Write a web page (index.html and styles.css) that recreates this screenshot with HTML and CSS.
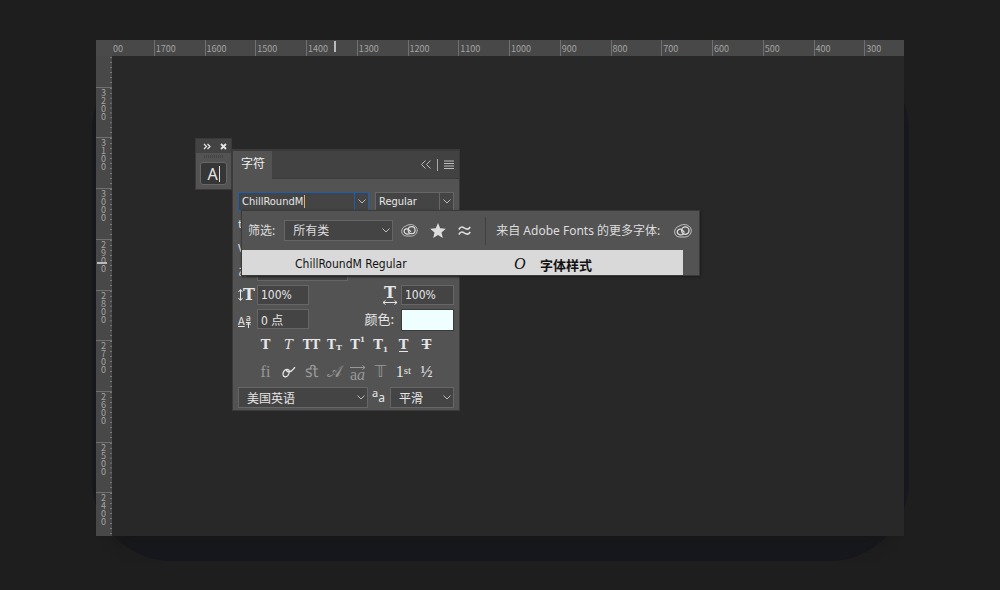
FILE: index.html
```html
<!DOCTYPE html>
<html lang="zh-CN">
<head>
    <meta charset="UTF-8">
    <meta name="viewport" content="width=device-width, initial-scale=1.0">
    <title>字符</title>
    <link rel="stylesheet" href="styles.css">
</head>
<body>
    <svg class="defs" aria-hidden="true">
        <symbol id="cloud" viewBox="0 0 18 14">
            <path d="M5 2.200C7.500.2 12.500 0 14.500 2c3.300 1.500 3.800 6.500.8 9.300-1.200 1.200-2.800 1.700-4.300 1.700H6C2.600 13 .6 10.800.6 7.900c0-2.800 1.900-5 4.400-5.700z" fill="none" stroke="currentColor" stroke-width="1" opacity=".8"/>
            <path d="M9.600 10.200C7 11.600 3.200 10.900 3.200 7.900c0-2.600 3.300-3.700 5.100-1.700l2.200 2.300" fill="none" stroke="currentColor" stroke-width="1.300"/>
            <circle cx="11.300" cy="6.600" r="3.700" fill="none" stroke="currentColor" stroke-width="1.300"/>
        </symbol>
    </svg>

    <main class="window">
        <div class="corner"></div>
        <div class="ruler ruler-top">
            <div class="scale">
                <span class="partial">00</span><span>1700</span><span>1600</span><span>1500</span>
                <span>1400</span><span>1300</span><span>1200</span><span>1100</span>
                <span>1000</span><span>900</span><span>800</span><span>700</span>
                <span>600</span><span>500</span><span>400</span><span>300</span>
            </div>
            <i class="marker"></i>
        </div>
        <div class="ruler ruler-left">
            <div class="scale">
                <span></span><span>3200</span><span>3100</span><span>3000</span><span>2900</span>
                <span>2800</span><span>2700</span><span>2600</span><span>2500</span><span>2400</span>
            </div>
            <i class="marker"></i>
        </div>

        <div class="canvas">
            <!-- collapsed dock -->
            <aside class="dock">
                <div class="dock-bar">
                    <svg width="8" height="7" viewBox="0 0 8 7"><path d="M1 1l2.500 2.500L1 6M4.500 1 7 3.500 4.500 6" fill="none" stroke="currentColor" stroke-width="1.200"/></svg>
                    <svg width="7" height="7" viewBox="0 0 7 7"><path d="M1 1l5 5M6 1 1 6" stroke="currentColor" stroke-width="1.800"/></svg>
                </div>
                <div class="grip"></div>
                <button class="dock-btn">A<i></i></button>
            </aside>

            <!-- character panel -->
            <section class="panel">
                <header class="panel-head">
                    <h1 class="tab">字符</h1>
                    <button class="plain" aria-label="折叠"><svg width="10" height="9" viewBox="0 0 10 9"><path d="M4.500.5l-4 4 4 4M9.500.5l-4 4 4 4" fill="none" stroke="currentColor"/></svg></button>
                    <i class="bar"></i>
                    <button class="plain" aria-label="菜单"><svg width="10" height="9" viewBox="0 0 10 9"><path d="M0 1h10M0 3.500h10M0 6h10M0 8.500h10" stroke="currentColor" stroke-width="1"/></svg></button>
                </header>
                <div class="panel-body">
                    <div class="font-row">
                        <div class="combo active">
                            <input type="text" value="ChillRoundM" size="4" class="family" aria-label="字体">
                            <button class="chev" aria-label="字体列表"></button>
                        </div>
                        <div class="combo">
                            <input type="text" value="Regular" size="4" aria-label="字体样式">
                            <button class="chev" aria-label="样式列表"></button>
                        </div>
                    </div>

                    <div class="fields">
                        <label class="ico" for="size">tT</label><input id="size" class="field" type="text">
                        <label class="ico" for="lead">A</label><input id="lead" class="field" type="text">
                        <label class="ico" for="kern">V/A</label><input id="kern" class="field" type="text">
                        <label class="ico" for="track">VA</label><input id="track" class="field" type="text">
                        <label class="ico" for="prop">あ</label><input id="prop" class="field wide" type="text">
                        <label class="ico" for="vscale" aria-label="垂直缩放">
                            <svg width="5" height="14" viewBox="0 0 5 14"><path d="M2.500 2v10M.5 4l2-2.500 2 2.500M.5 10l2 2.500 2-2.500" fill="none" stroke="currentColor"/></svg><b class="bigt">T</b>
                        </label>
                        <input id="vscale" class="field" type="text" value="100%">
                        <label class="ico right" for="hscale" aria-label="水平缩放">
                            <span class="stack"><b class="bigt">T</b><svg width="16" height="5" viewBox="0 0 16 5"><path d="M1 2.500h14M3.500.5l-2.500 2 2.500 2M12.500.5l2.500 2-2.500 2" fill="none" stroke="currentColor"/></svg></span>
                        </label>
                        <input id="hscale" class="field" type="text" value="100%">
                        <label class="ico base" for="shift" aria-label="基线偏移">
                            <u>A</u><span class="stack"><u>a</u><svg width="5" height="6" viewBox="0 0 5 6"><path d="M2.500 6V1M.5 3l2-2 2 2" fill="none" stroke="currentColor"/></svg></span>
                        </label>
                        <input id="shift" class="field" type="text" value="0 点">
                        <label class="color-label" for="color">颜色:</label>
                        <input id="color" class="swatch" type="color" value="#efffff">
                    </div>

                    <div class="styles">
                        <button><b>T</b></button>
                        <button><em>T</em></button>
                        <button class="pair">TT</button>
                        <button class="pair">T<small>T</small></button>
                        <button>T<sup>1</sup></button>
                        <button>T<sub>1</sub></button>
                        <button><u>T</u></button>
                        <button><s>T</s></button>
                    </div>
                    <div class="styles opentype">
                        <button class="off">fi</button>
                        <button aria-label="上下文替代字"><svg width="14" height="12" viewBox="0 0 14 12"><path d="M5 3.500C2.500 3.500.8 6 1 8.500c.2 2.700 3.200 3 5 .8 2-2.600 1.800-5.800-.5-5.800-2 0-.8 2.500 1.500 2.400C10 5.800 11 3.500 13 1.200" fill="none" stroke="currentColor" stroke-width="1.300"/></svg></button>
                        <button class="off">ﬆ</button>
                        <button class="off script">𝒜</button>
                        <button class="off over"><svg width="16" height="5" viewBox="0 0 16 5"><path d="M0 2.500h15M12.500.5l2.500 2-2.500 2" fill="none" stroke="currentColor"/></svg><span>a<em>a</em></span></button>
                        <button class="off dbl">𝕋</button>
                        <button>1<sup>st</sup></button>
                        <button>½</button>
                    </div>

                    <div class="bottom-row">
                        <select class="select" aria-label="语言"><option>美国英语</option></select>
                        <label class="aa" for="alias"><sup>a</sup>a</label>
                        <select id="alias" class="select"><option>平滑</option></select>
                    </div>
                </div>
            </section>

            <!-- font list dropdown -->
            <div class="popup">
                <div class="filter">
                    <label for="class">筛选:</label>
                    <select id="class" class="select"><option>所有类</option></select>
                    <button class="plain" aria-label="Adobe Fonts"><svg width="17" height="13"><use href="#cloud"/></svg></button>
                    <button class="plain" aria-label="收藏"><svg width="16" height="15" viewBox="0 0 16 15"><path d="M8 0l2.200 5.300 5.600.4-4.300 3.700 1.300 5.500L8 12l-4.800 2.900 1.300-5.500L.2 5.700l5.600-.4z" fill="currentColor"/></svg></button>
                    <button class="plain" aria-label="相似字体"><svg width="13" height="10" viewBox="0 0 13 10"><path d="M.8 3.500C3-.2 4.800 1 6.500 2.200 8.500 3.500 10.500 3.800 12.200 1M.8 8.500C3 4.800 4.800 6 6.500 7.200c2 1.300 4 1.600 5.700-1.200" fill="none" stroke="currentColor" stroke-width="1.600"/></svg></button>
                    <span class="more">来自 Adobe Fonts 的更多字体:</span>
                    <button class="plain" aria-label="更多字体"><svg width="18" height="14"><use href="#cloud"/></svg></button>
                </div>
                <button class="result">
                    <span class="name">ChillRoundM Regular</span>
                    <em>O</em>
                    <strong>字体样式</strong>
                </button>
            </div>
        </div>
    </main>
</body>
</html>
```
FILE: styles.css
```css
* {
    box-sizing: border-box;
}

body {
    margin: 0;
    padding: 40px 96px 54px;
    min-height: 100vh;
    display: flex;
    background: #1e1e1e;
    color: #e6e6e6;
    font-family: "Noto Sans CJK SC", "Noto Sans", sans-serif;
    font-size: 12px;
    line-height: 16px;
}

button, input, select {
    margin: 0;
    padding: 0;
    border: 0;
    border-radius: 0;
    background: none;
    color: inherit;
    font: inherit;
    outline: none;
}

svg {
    display: block;
}

.defs {
    position: absolute;
    width: 0;
    height: 0;
}

/* window with rulers */
.window {
    position: relative;
    flex: 1;
    display: grid;
    grid-template-columns: 16px 1fr;
    grid-template-rows: 16px 1fr;
    box-shadow: 0 24px 14px -20px #171717;
}

.window::before {
    content: "";
    position: absolute;
    z-index: -1;
    inset: 10px -5px -25px -4px;
    border-radius: 80px;
    background: #17181d;
}

.corner {
    background: #4a4a4a;
}

.ruler {
    position: relative;
    display: grid;
    overflow: hidden;
    background: #484848;
    color: #a3a3a3;
    font-size: 9px;
}

.scale {
    display: grid;
}

.ruler-top .scale {
    grid-template-columns: repeat(16, 1fr);
    margin: 0 -11px 0 -9px;
}

.ruler-top span {
    padding-left: 1px;
    line-height: 18px;
    border-left: 1px solid #707070;
    background: linear-gradient(90deg, #777 1px, transparent 1px) 0 100% / 10% 2px repeat-x;
}

.ruler-top .partial {
    padding-left: 9px;
}

.ruler-left .scale {
    grid-template-rows: repeat(10, 1fr);
    margin: -20px 0 -7px;
}

.ruler-left span {
    padding: 1px 3px 0 5px;
    line-height: 8px;
    word-break: break-all;
    border-top: 1px solid #707070;
    background: linear-gradient(#777 1px, transparent 1px) 100% 0 / 2px 10% repeat-y;
}

.marker {
    position: absolute;
    background: #bbb;
}

.ruler-top .marker {
    left: 222px;
    top: 1px;
    width: 2px;
    height: 11px;
}

.ruler-left .marker {
    left: 1px;
    top: 206px;
    width: 10px;
    height: 2px;
}

.canvas {
    position: relative;
    background: #282828;
}

/* dock */
.dock {
    position: absolute;
    left: 83px;
    top: 82px;
    width: 37px;
    border: 1px solid #3a3a3a;
    background: #535353;
}

.dock-bar {
    display: flex;
    align-items: center;
    justify-content: space-between;
    height: 14px;
    padding: 0 4px 0 7px;
    background: #434343;
}

.grip {
    height: 3px;
    margin: 2px 8px 4px;
    background: repeating-linear-gradient(90deg, #444 0 1px, #535353 1px 2px);
}

.dock-btn {
    display: flex;
    align-items: center;
    justify-content: center;
    width: 27px;
    height: 23px;
    margin: 0 4px 4px;
    border: 1px solid #666;
    border-radius: 3px;
    background: #363636;
    font-family: "Noto Sans", sans-serif;
    font-size: 16px;
}

.dock-btn i {
    width: 1px;
    height: 16px;
    margin-left: 1px;
    background: #ddd;
}

/* panel */
.panel {
    position: absolute;
    left: 120px;
    top: 93px;
    width: 228px;
    border: 1px solid #3a3a3a;
    border-top-width: 2px;
    background: #535353;
}

.panel-head {
    display: flex;
    align-items: center;
    gap: 6px;
    height: 28px;
    padding-right: 5px;
    background: #424242;
    border-bottom: 1px solid #3b3b3b;
    color: #bbb;
}

.tab {
    height: 28px;
    margin: 0 auto 0 0;
    padding: 0 7px 0 8px;
    background: #535353;
    color: #f0f0f0;
    font-size: 12px;
    font-weight: normal;
    line-height: 24px;
}

.bar {
    width: 1px;
    height: 12px;
    background: #aaa;
}

.panel-body {
    padding: 13px 5px 1px;
}

.font-row {
    display: grid;
    grid-template-columns: 131px 1fr;
    gap: 6px;
    margin-bottom: 2px;
}

.combo {
    display: flex;
    height: 19px;
    border: 1px solid #666;
    background: #444;
}

.combo input {
    flex: 1;
    min-width: 0;
    padding-left: 3px;
}

.combo.active,
.combo.active .chev {
    border-color: #1c5fae;
}

.combo .family {
    background: linear-gradient(#e0b070, #e0b070) 65px 50% / 1px 13px no-repeat;
}

.chev {
    width: 14px;
    border-left: 1px solid #666;
}

.chev, .select {
    background: #444 url("data:image/svg+xml,%3Csvg xmlns='http://www.w3.org/2000/svg' width='8' height='5'%3E%3Cpath d='M.5.5L4 4 7.500.5' fill='none' stroke='%23bbb'/%3E%3C/svg%3E") right 2px center no-repeat;
}

.fields {
    display: grid;
    grid-template-columns: 19px 52px 1fr 53px;
    gap: 4px 0;
}

.field {
    width: 100%;
    height: 20px;
    padding-left: 3px;
    border: 1px solid #666;
    background: #444;
}

.combo input, .field, .result .name {
    font-family: "DejaVu Sans Condensed", "Noto Sans CJK SC", sans-serif;
    font-size: 12px;
}

.combo input {
    font-size: 11px;
}

.field.wide {
    width: 91px;
    grid-column: 2 / 5;
}

.ico {
    display: flex;
    align-items: center;
    font-size: 11px;
    white-space: nowrap;
}

.ico.right {
    justify-content: flex-end;
    padding-right: 3px;
}

.ico.base {
    gap: 1px;
}

.ico.base .stack {
    font-size: 9px;
}

.bigt {
    font: bold 16px/14px "DejaVu Serif", serif;
}

.stack {
    display: flex;
    flex-direction: column;
    align-items: center;
    line-height: 9px;
}

.color-label {
    padding-right: 7px;
    text-align: right;
    font-size: 13px;
    line-height: 20px;
}

.swatch {
    width: 100%;
    height: 22px;
    border: 1px solid #3a3a3a;
}

.swatch::-webkit-color-swatch-wrapper {
    padding: 0;
}

.swatch::-webkit-color-swatch {
    border: 0;
}

.styles {
    display: grid;
    grid-template-columns: repeat(8, 23px);
    justify-content: center;
    margin: 4px 0 7px;
    font: bold 13px/20px "DejaVu Serif", serif;
}

.styles button {
    display: flex;
    align-items: center;
    justify-content: center;
    height: 20px;
}

.styles em {
    font-weight: normal;
}

.styles .pair {
    font-size: 12px;
}

.styles small {
    font-size: 8px;
    line-height: 16px;
    align-self: flex-end;
}

.styles sup, .styles sub {
    font-size: 7px;
    line-height: 10px;
}

.styles sup {
    align-self: flex-start;
}

.styles sub {
    align-self: flex-end;
}

.styles u {
    line-height: 13px;
    border-bottom: 1px solid;
    text-decoration: none;
}

.styles.opentype {
    margin: 0 0 5px;
    font: 16px/20px "Liberation Serif", serif;
}

.opentype sup {
    font-size: 11px;
    line-height: 16px;
}

.off {
    color: #999;
}

.opentype .script, .opentype .dbl {
    font-family: "DejaVu Sans", "DejaVu Serif", serif;
    font-size: 16px;
}

.opentype .dbl {
    font-style: italic;
}

.opentype .over {
    flex-direction: column;
    line-height: 9px;
}

.bottom-row {
    display: grid;
    grid-template-columns: 130px 1fr 64px;
}

.select {
    appearance: none;
    height: 21px;
    padding: 0 14px 0 8px;
    border: 1px solid #666;
}

.aa {
    padding-left: 4px;
    font-family: "Noto Sans", sans-serif;
    line-height: 22px;
}

.aa sup {
    font-size: 11px;
    line-height: 1px;
}

/* popup */
.popup {
    position: absolute;
    left: 129px;
    top: 154px;
    width: 459px;
    border: 1px solid #3a3a3a;
    background: #535353;
    box-shadow: 1px 1px 2px #1c1c1c;
}

.filter {
    display: flex;
    align-items: center;
    height: 39px;
    padding: 0 7px 0 6px;
    color: #ddd;
    font-family: "Noto Sans", "Noto Sans CJK SC", sans-serif;
}

.filter .select {
    width: 109px;
    margin: 0 8px 0 9px;
}

.filter .plain + .plain {
    margin-left: 12px;
}

.more {
    flex: 1;
    margin-left: 14px;
    padding-left: 10px;
    border-left: 1px solid #404040;
    line-height: 28px;
    white-space: nowrap;
}

.result {
    display: grid;
    grid-template-columns: 219px 26px 1fr;
    align-items: center;
    width: 441px;
    height: 25px;
    padding: 2px 0 0 53px;
    background: #d9d9d9;
    color: #111;
    text-align: left;
}

.result em {
    font: italic 16px/20px "Liberation Serif", serif;
}

.result strong {
    padding-top: 3px;
    font-size: 13px;
}
```
